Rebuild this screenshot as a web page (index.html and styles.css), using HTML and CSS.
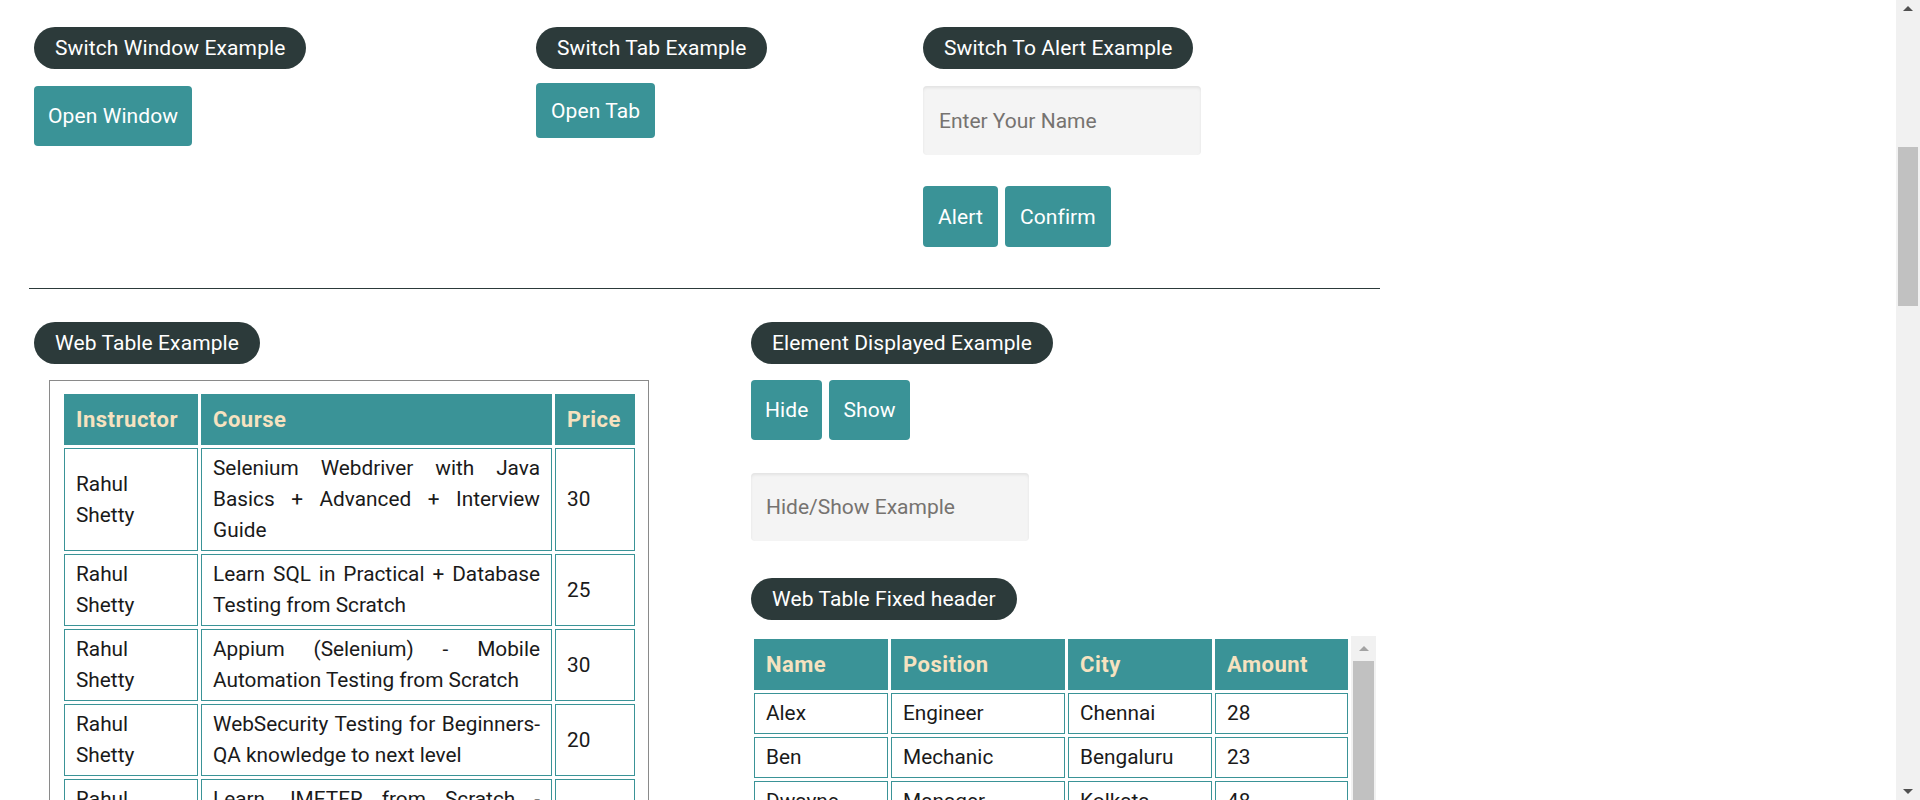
FILE: index.html
```html
<!DOCTYPE html>
<html lang="en">
<head>
<meta charset="utf-8">
<title>Practice Page</title>
<link rel="stylesheet" href="styles.css">
</head>
<body>
<div class="viewport">
  <main class="page">
    <section class="row row-top">
      <div class="col col-window">
        <div class="pill">Switch Window Example</div>
        <button class="btn btn-window">Open Window</button>
      </div>
      <div class="col col-tab">
        <div class="pill">Switch Tab Example</div>
        <button class="btn btn-tab">Open Tab</button>
      </div>
      <div class="col col-alert">
        <div class="pill">Switch To Alert Example</div>
        <input class="field field-name" type="text" placeholder="Enter Your Name">
        <div class="btn-group btn-group-alert">
          <button class="btn btn-alert">Alert</button>
          <button class="btn btn-alert">Confirm</button>
        </div>
      </div>
    </section>

    <hr class="divider">

    <section class="row row-tables">
      <div class="col col-webtable">
        <div class="pill">Web Table Example</div>
        <div class="table-box">
          <table class="course-table">
            <thead>
              <tr><th class="c-instructor">Instructor</th><th class="c-course">Course</th><th class="c-price">Price</th></tr>
            </thead>
            <tbody>
              <tr><td>Rahul Shetty</td><td class="just">Selenium Webdriver with Java Basics + Advanced + Interview Guide</td><td>30</td></tr>
              <tr><td>Rahul Shetty</td><td class="just">Learn SQL in Practical + Database Testing from Scratch</td><td>25</td></tr>
              <tr><td>Rahul Shetty</td><td class="just">Appium (Selenium) - Mobile Automation Testing from Scratch</td><td>30</td></tr>
              <tr><td>Rahul Shetty</td><td class="just">WebSecurity Testing for Beginners-QA knowledge to next level</td><td>20</td></tr>
              <tr><td>Rahul Shetty</td><td class="just">Learn JMETER from Scratch - (Performance + Load) Testing Tool</td><td>25</td></tr>
              <tr><td>Rahul Shetty</td><td class="just">WebServices / REST API Testing with SoapUI</td><td>35</td></tr>
              <tr><td>Rahul Shetty</td><td class="just">QA Expert Course :Software Testing + Bugzilla + SQL + Agile</td><td>25</td></tr>
            </tbody>
          </table>
        </div>
      </div>
      <div class="col col-display">
        <div class="pill">Element Displayed Example</div>
        <div class="btn-group btn-group-display">
          <button class="btn btn-display">Hide</button>
          <button class="btn btn-display">Show</button>
        </div>
        <input class="field field-show" type="text" placeholder="Hide/Show Example">
        <div class="pill pill-fixed">Web Table Fixed header</div>
        <div class="fixed-wrap">
          <table class="people-table">
            <thead>
              <tr><th class="p-name">Name</th><th class="p-position">Position</th><th class="p-city">City</th><th class="p-amount">Amount</th></tr>
            </thead>
            <tbody>
              <tr><td>Alex</td><td>Engineer</td><td>Chennai</td><td>28</td></tr>
              <tr><td>Ben</td><td>Mechanic</td><td>Bengaluru</td><td>23</td></tr>
              <tr><td>Dwayne</td><td>Manager</td><td>Kolkata</td><td>48</td></tr>
              <tr><td>Ivory</td><td>Receptionist</td><td>Chennai</td><td>18</td></tr>
              <tr><td>Jack</td><td>Engineer</td><td>Pune</td><td>32</td></tr>
            </tbody>
          </table>
          <div class="mini-scroll">
            <div class="mini-arrow"><span class="tri tri-up tri-light"></span></div>
            <div class="mini-thumb"></div>
          </div>
        </div>
      </div>
    </section>
  </main>

  <div class="scrollbar">
    <div class="sb-arrow sb-arrow-top"><span class="tri tri-up"></span></div>
    <div class="sb-thumb"></div>
    <div class="sb-fill"></div>
    <div class="sb-arrow sb-arrow-bottom"><span class="tri tri-down"></span></div>
  </div>
</div>
</body>
</html>
```

FILE: styles.css
```css
html, body {
  margin: 0;
  padding: 0;
  background: #ffffff;
}

body {
  font-family: Roboto, "Liberation Sans", sans-serif;
  font-size: 21px;
  font-weight: 400;
  color: #1a1a1a;
}

.viewport {
  display: flex;
  width: 1920px;
  height: 800px;
  overflow: hidden;
}

.page {
  flex: 1;
  min-width: 0;
  padding: 27px 0 0 29px;
  overflow: hidden;
}

/* rows & columns */
.row {
  display: flex;
  align-items: flex-start;
  padding-left: 5px;
}

.col {
  display: flex;
  flex-direction: column;
  align-items: flex-start;
}

.col-window { width: 502px; }
.col-tab { width: 387px; }
.col-webtable { width: 717px; }

/* pill headings */
.pill {
  height: 42px;
  line-height: 42px;
  padding: 0 21px;
  border-radius: 21px;
  background: #2c3a3a;
  color: #ffffff;
  font-size: 21px;
  letter-spacing: 0.1px;
  white-space: nowrap;
}

/* buttons */
.btn {
  font-family: inherit;
  font-size: 21px;
  font-weight: 400;
  letter-spacing: 0.1px;
  line-height: 24px;
  color: #ffffff;
  background: #3a9397;
  border: 0;
  border-radius: 4px;
  padding: 18px 15px;
  cursor: pointer;
}

.btn-window { margin-top: 17px; padding: 18px 14px; }
.btn-tab { margin-top: 14px; padding: 15.5px 15px; }

.btn-group {
  display: flex;
  gap: 7px;
}

.btn-group-alert { margin-top: 31px; }
.btn-alert { padding: 18.5px 15px; }

.btn-group-display { margin-top: 16px; }
.btn-display { padding: 18px 14px; }

/* inputs */
.field {
  box-sizing: border-box;
  width: 278px;
  height: 68px;
  padding: 0 16px;
  border: 0;
  border-radius: 4px;
  background: #f4f4f4;
  box-shadow: inset 0 2px 3px rgba(0, 0, 0, 0.07);
  font-family: inherit;
  font-size: 21px;
  color: #333333;
  outline: none;
}

.field::placeholder { color: #767370; }

.field-name { margin-top: 17px; height: 69px; }
.field-show { margin-top: 33px; padding: 0 15px; }

.pill-fixed { margin-top: 37px; }

/* divider */
.divider {
  width: 1351px;
  margin: 41px 0 0 0;
  border: 0;
  border-top: 1px solid #2c3a3a;
  height: 0;
}

.row-tables { margin-top: 33px; }

/* course table */
.table-box {
  box-sizing: border-box;
  width: 600px;
  margin: 16px 0 0 15px;
  padding: 10px 10px 0 11px;
  border: 1px solid #8a8a8a;
}

table {
  border-collapse: separate;
  border-spacing: 3px;
  table-layout: fixed;
}

th, td {
  box-sizing: border-box;
  border: 1px solid #3a9397;
  line-height: 31px;
  text-align: left;
  vertical-align: middle;
}

th {
  background: #3a9397;
  color: #f6e2c0;
  font-weight: 700;
  font-size: 22px;
  letter-spacing: 0.5px;
  padding: 9px 11px;
}

td {
  padding: 4px 11px;
  font-size: 20.8px;
  color: #1a1a1a;
}

td.just { text-align: justify; }

.course-table { width: 577px; }
.c-instructor { width: 134px; }
.c-course { width: 351px; }
.c-price { width: 80px; }

/* fixed header table */
.fixed-wrap {
  display: flex;
  align-items: flex-start;
  width: 625px;
  height: 300px;
  margin-top: 16px;
  overflow: hidden;
}

.people-table { width: 600px; flex: none; }
.p-name { width: 134px; }
.p-position { width: 174px; }
.p-city { width: 144px; }
.p-amount { width: 133px; }

.mini-scroll {
  width: 25px;
  height: 300px;
  flex: none;
  background: #f1f1f1;
  display: flex;
  flex-direction: column;
  align-items: center;
}

.mini-arrow {
  height: 25px;
  width: 100%;
  display: flex;
  align-items: center;
  justify-content: center;
}

.mini-thumb {
  width: 21px;
  flex: 1;
  background: #c1c1c1;
}

/* page scrollbar */
.scrollbar {
  width: 24px;
  flex: none;
  height: 800px;
  background: #f1f1f1;
  display: flex;
  flex-direction: column;
  align-items: center;
}

.sb-arrow {
  width: 100%;
  height: 17px;
  display: flex;
  align-items: center;
  justify-content: center;
}

.sb-thumb {
  width: 20px;
  height: 159px;
  margin-top: 130px;
  background: #c1c1c1;
}

.sb-fill { flex: 1; }

.tri {
  width: 0;
  height: 0;
  border-left: 5.5px solid transparent;
  border-right: 5.5px solid transparent;
}

.tri-up { border-bottom: 5px solid #505050; }
.tri-down { border-top: 5px solid #505050; }
.tri-light { border-bottom-color: #a3a3a3; }
```
